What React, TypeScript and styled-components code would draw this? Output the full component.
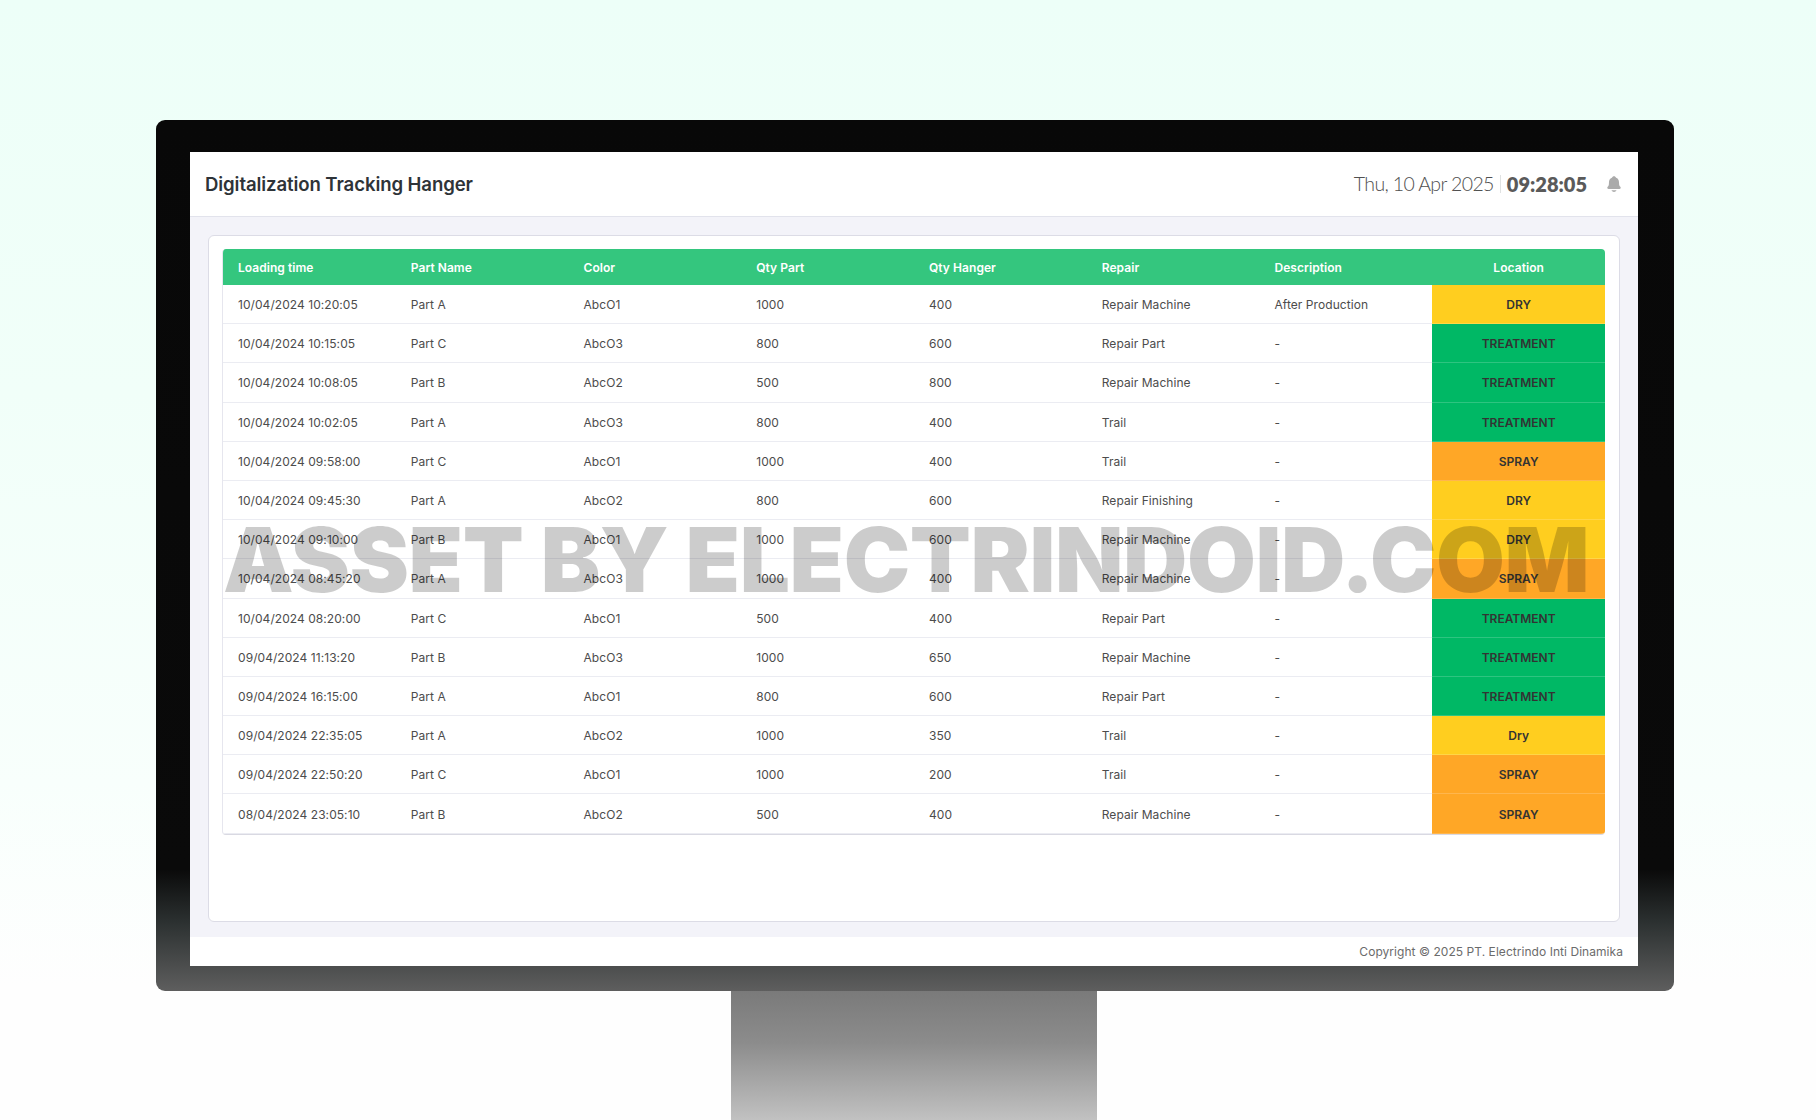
import React from "react";
import styled, { createGlobalStyle } from "styled-components";
import { IoNotifications } from "react-icons/io5";

const Global = createGlobalStyle`
  html, body { margin: 0; padding: 0; }
  body { font-family: "Inter", "Liberation Sans", sans-serif; background: #fff; }
  * { box-sizing: border-box; }
`;

const Page = styled.div`
  position: relative;
  width: 1816px;
  height: 1120px;
  overflow: hidden;
  padding: 120px 142px 0 156px;
  background: linear-gradient(180deg, #edfff8 0%, #f1fff9 35%, #f8fffc 70%, #fefefe 88%, #fefefe 100%);
`;

const Monitor = styled.div`
  width: 1518px;
  height: 871px;
  padding: 32px 36px 25px 34px;
  border-radius: 9px;
  background: linear-gradient(180deg, #080808 0%, #0a0a0a 86%, #2b3030 92%, #5e5e5e 100%);
`;

const Stand = styled.div`
  width: 366px;
  height: 130px;
  margin-left: 575px;
  background: linear-gradient(180deg, #7a7a7a 0%, #8c8c8c 40%, #c2c2c2 100%);
`;

const Screen = styled.div`
  height: 100%;
  display: flex;
  flex-direction: column;
  background: #f3f3f9;
`;

const Header = styled.header`
  flex: 0 0 65px;
  display: flex;
  align-items: center;
  justify-content: space-between;
  padding: 0 15px 0 15px;
  background: #fff;
  border-bottom: 1px solid #e2e3ec;
`;

const Title = styled.h1`
  margin: 0;
  font-size: 18.6px;
  font-weight: 600;
  letter-spacing: -0.1px;
  color: #2e3338;
`;

const Clock = styled.div`
  display: flex;
  align-items: center;
  font-family: "Lato", "Inter", sans-serif;
  font-size: 20px;
  color: #666;
`;

const DateText = styled.span`
  font-weight: 300;
  font-size: 19.5px;
  letter-spacing: -0.62px;
  color: #505050;
  padding-right: 6px;
  border-right: 1px solid #e0e2e2;
  line-height: 18px;
`;

const TimeText = styled.span`
  font-weight: 800;
  color: #5a5a5a;
  padding-left: 6px;
`;

const BellWrap = styled.span`
  display: flex;
  margin-left: 18px;
  color: #aaa;
  font-size: 18px;
`;

const Content = styled.main`
  flex: 1;
  min-height: 0;
  padding: 18px 18px 15px 18px;
`;

const Card = styled.section`
  height: 100%;
  padding: 13px 14px 0 13px;
  background: #fff;
  border: 1px solid #dcdce6;
  border-radius: 6px;
`;

const Table = styled.div`
  border-left: 1px solid #e6e6ee;
  border-bottom: 1px solid #d9d9e2;
  border-radius: 4px;
  overflow: hidden;
`;

const HeadRow = styled.div`
  display: grid;
  grid-template-columns: repeat(8, 1fr);
  height: 36px;
  background: #34c67e;
  color: #fff;
  font-size: 12px;
  font-weight: 600;
  letter-spacing: 0.05px;
`;

const HeadCell = styled.div<{ $center?: boolean }>`
  display: flex;
  align-items: center;
  justify-content: ${(p) => (p.$center ? "center" : "flex-start")};
  padding-left: ${(p) => (p.$center ? "0" : "15px")};
`;

const Row = styled.div`
  display: grid;
  grid-template-columns: repeat(8, 1fr);
  height: 39.2px;
`;

const Cell = styled.div`
  display: flex;
  align-items: center;
  padding: 1px 0 0 15px;
  font-size: 12px;
  letter-spacing: 0.06px;
  color: #4c4c4c;
  border-bottom: 1px solid #ebecf2;
`;

const LOCATION_BG: Record<string, string> = {
  DRY: "#ffce1f",
  TREATMENT: "#00b865",
  SPRAY: "#ffa726",
};

const LocationCell = styled.div<{ $kind: string }>`
  display: flex;
  align-items: center;
  justify-content: center;
  padding-top: 1px;
  font-size: 12px;
  font-weight: 600;
  color: #333;
  background: ${(p) => LOCATION_BG[p.$kind]};
  border-bottom: 1px solid rgba(255, 255, 255, 0.18);
`;

const Footer = styled.footer`
  flex: 0 0 29px;
  display: flex;
  align-items: center;
  justify-content: flex-end;
  padding-right: 15px;
  background: #fff;
  font-size: 12px;
  letter-spacing: 0.05px;
  color: #6b6b6b;
`;

const Watermark = styled.div`
  position: absolute;
  left: 223px;
  top: 505px;
  font-size: 89px;
  line-height: 110px;
  font-weight: 900;
  letter-spacing: -0.42px;
  white-space: nowrap;
  color: rgba(0, 0, 0, 0.2);
  pointer-events: none;
`;

const heads = ["Loading time", "Part Name", "Color", "Qty Part", "Qty Hanger", "Repair", "Description"];

const rows: string[][] = [
  ["10/04/2024 10:20:05", "Part A", "AbcO1", "1000", "400", "Repair Machine", "After Production", "DRY"],
  ["10/04/2024 10:15:05", "Part C", "AbcO3", "800", "600", "Repair Part", "-", "TREATMENT"],
  ["10/04/2024 10:08:05", "Part B", "AbcO2", "500", "800", "Repair Machine", "-", "TREATMENT"],
  ["10/04/2024 10:02:05", "Part A", "AbcO3", "800", "400", "Trail", "-", "TREATMENT"],
  ["10/04/2024 09:58:00", "Part C", "AbcO1", "1000", "400", "Trail", "-", "SPRAY"],
  ["10/04/2024 09:45:30", "Part A", "AbcO2", "800", "600", "Repair Finishing", "-", "DRY"],
  ["10/04/2024 09:10:00", "Part B", "AbcO1", "1000", "600", "Repair Machine", "-", "DRY"],
  ["10/04/2024 08:45:20", "Part A", "AbcO3", "1000", "400", "Repair Machine", "-", "SPRAY"],
  ["10/04/2024 08:20:00", "Part C", "AbcO1", "500", "400", "Repair Part", "-", "TREATMENT"],
  ["09/04/2024 11:13:20", "Part B", "AbcO3", "1000", "650", "Repair Machine", "-", "TREATMENT"],
  ["09/04/2024 16:15:00", "Part A", "AbcO1", "800", "600", "Repair Part", "-", "TREATMENT"],
  ["09/04/2024 22:35:05", "Part A", "AbcO2", "1000", "350", "Trail", "-", "Dry"],
  ["09/04/2024 22:50:20", "Part C", "AbcO1", "1000", "200", "Trail", "-", "SPRAY"],
  ["08/04/2024 23:05:10", "Part B", "AbcO2", "500", "400", "Repair Machine", "-", "SPRAY"],
];

export default function App() {
  return (
    <Page>
      <Global />
      <Monitor>
        <Screen>
          <Header>
            <Title>Digitalization Tracking Hanger</Title>
            <Clock>
              <DateText>Thu, 10 Apr 2025</DateText>
              <TimeText>09:28:05</TimeText>
              <BellWrap>
                <IoNotifications />
              </BellWrap>
            </Clock>
          </Header>
          <Content>
            <Card>
              <Table>
                <HeadRow>
                  {heads.map((h) => (
                    <HeadCell key={h}>{h}</HeadCell>
                  ))}
                  <HeadCell $center>Location</HeadCell>
                </HeadRow>
                {rows.map((r, i) => (
                  <Row key={i}>
                    {r.slice(0, 7).map((c, j) => (
                      <Cell key={j}>{c}</Cell>
                    ))}
                    <LocationCell $kind={r[7].toUpperCase()}>{r[7]}</LocationCell>
                  </Row>
                ))}
              </Table>
            </Card>
          </Content>
          <Footer>Copyright © 2025 PT. Electrindo Inti Dinamika</Footer>
        </Screen>
      </Monitor>
      <Stand />
      <Watermark>ASSET BY ELECTRINDOID.COM</Watermark>
    </Page>
  );
}
